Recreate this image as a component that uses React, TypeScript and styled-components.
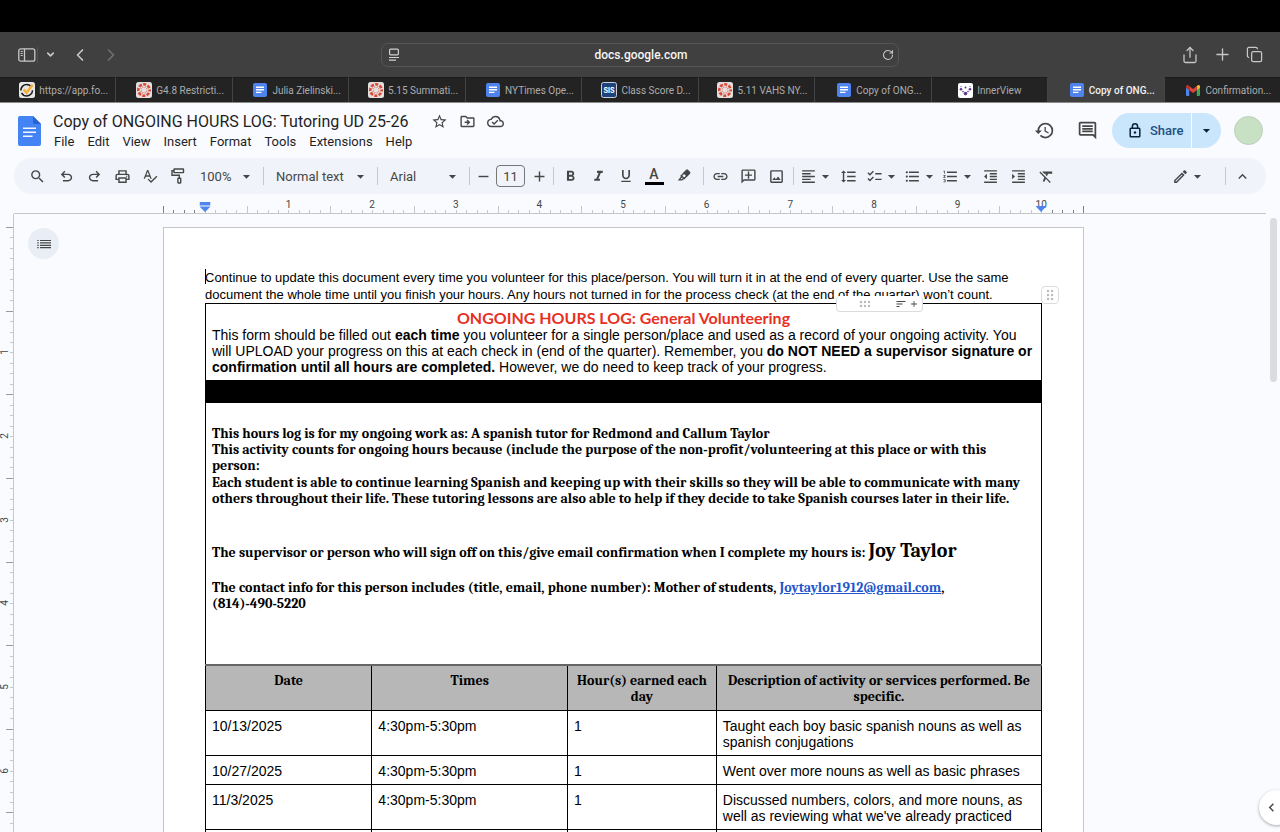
import React from 'react';
import styled, { createGlobalStyle } from 'styled-components';
import { ChevronLeft, ChevronRight, ChevronDown, Copy, Plus, RotateCw, Share } from 'lucide-react';
import {
  MdSearch, MdOutlinePrint, MdSpellcheck, MdArrowDropDown, MdRemove, MdAdd, MdFormatBold,
  MdFormatItalic, MdFormatUnderlined, MdLink, MdOutlineAddComment, MdOutlineImage, MdFormatAlignLeft,
  MdFormatLineSpacing, MdChecklist, MdFormatListBulleted, MdFormatListNumbered, MdFormatIndentDecrease,
  MdFormatIndentIncrease, MdFormatClear, MdOutlineEdit, MdKeyboardArrowUp, MdKeyboardArrowLeft, MdHistory,
  MdOutlineComment, MdStarBorder, MdOutlineDriveFileMove, MdOutlineCloudDone, MdSort,
} from 'react-icons/md';

const ui = `Roboto, "Liberation Sans", sans-serif`;
const arial = `"Liberation Sans", Arial, sans-serif`;
const cambria = `Cambria, "Liberation Serif", serif`;

const Global = createGlobalStyle`
  *, *::before, *::after { box-sizing: border-box; }
  body { margin: 0; background: #f9fbff; overflow: hidden; }
  button, input, select { font: inherit; color: inherit; margin: 0; padding: 0; border: 0; background: none; }
  button { cursor: pointer; }
  svg { display: block; flex: none; }
`;

const App_ = styled.div`
  display: flex;
  flex-direction: column;
  height: 100vh;
  font-family: ${ui};
  color: #444746;
`;

const MenuBarGap = styled.div`
  height: 32px;
  flex: none;
  background: #000;
`;

/* Browser chrome */
const BrowserBar = styled.header`
  display: grid;
  grid-template-columns: 1fr minmax(200px, 518px) 1fr;
  align-items: center;
  height: 45px;
  flex: none;
  padding: 0 16px;
  background: #404040;
  color: #c4c4c4;
`;

const BarSide = styled.div<{ $end?: boolean }>`
  display: flex;
  align-items: center;
  justify-content: ${(p) => (p.$end ? 'flex-end' : 'flex-start')};
  gap: ${(p) => (p.$end ? 12 : 0)}px;
`;

const BarButton = styled.button<{ $w: number; $dim?: boolean }>`
  display: flex;
  justify-content: center;
  width: ${(p) => p.$w}px;
  color: ${(p) => (p.$dim ? '#707070' : '#c8c8c8')};
`;

const BarRule = styled.span`
  width: 1px;
  height: 16px;
  background: #525252;
`;

const Address = styled.div`
  display: flex;
  align-items: center;
  height: 24px;
  padding: 0 4px 0 6px;
  border: 1px solid #555;
  border-radius: 7px;
  color: #d0d0d0;
`;

const AddressInput = styled.input`
  flex: 1;
  min-width: 0;
  text-align: center;
  font-size: 12px;
  font-weight: 500;
  color: #f4f4f4;
`;

const TabStrip = styled.nav`
  display: flex;
  height: 26px;
  flex: none;
  border-bottom: 1px solid #8a8a8a;
  background: #232323;
`;

const Tab = styled.button<{ $active?: boolean }>`
  display: flex;
  flex: 1 1 0;
  min-width: 0;
  align-items: center;
  justify-content: center;
  gap: 4px;
  padding-left: 12px;
  border-top: 1px solid ${(p) => (p.$active ? '#404040' : '#1b1b1b')};
  border-right: 1px solid #444;
  background: ${(p) => (p.$active ? '#404040' : '#232323')};
  color: ${(p) => (p.$active ? '#f2f2f2' : '#acacac')};
  font-size: 10px;
  font-weight: ${(p) => (p.$active ? 500 : 400)};
  white-space: nowrap;
  &:last-child { border-right: 0; }
`;

const TabMark = styled.span`
  display: flex;
  flex: none;
  justify-content: center;
  width: 16px;
`;

const TabLabel = styled.span`
  min-width: 56px;
  text-align: left;
`;

/* Document header */
const DocHeader = styled.header`
  display: flex;
  align-items: center;
  flex: none;
  height: 55px;
  padding: 0 17px 0 18px;
`;

const TitleBlock = styled.div`
  display: flex;
  flex-direction: column;
  flex: 1;
  min-width: 0;
  margin-left: 5px;
`;

const TitleRow = styled.div`
  display: flex;
  align-items: center;
  gap: 11px;
  height: 22px;
  padding-left: 7px;
`;

const Title = styled.h1`
  margin: 0 12px 0 0;
  font-size: 16px;
  line-height: 22px;
  font-weight: 400;
  color: #1f1f1f;
  white-space: nowrap;
`;

const PlainButton = styled.button`
  display: flex;
  align-items: center;
  justify-content: center;
`;

const Menus = styled.nav`
  display: flex;
  height: 18px;
  padding-left: 2px;
`;

const MenuItem = styled.button`
  padding: 0 7px 0 6px;
  font-size: 13px;
  line-height: 18px;
  color: #1f1f1f;
`;

const HeaderTools = styled.div`
  display: flex;
  align-items: center;
  gap: 22px;
  margin-right: 14px;
`;

const ShareGroup = styled.div`
  display: flex;
  gap: 1px;
  height: 35px;
  margin-right: 13px;
`;

const ShareButton = styled.button`
  display: flex;
  align-items: center;
  gap: 9px;
  width: 79px;
  padding-left: 17px;
  border-radius: 18px 0 0 18px;
  background: #c9e6fd;
  color: #0b2239;
  font-size: 13px;
  font-weight: 500;
  span { color: #1f4f80; }
`;

const ShareMore = styled.button`
  display: flex;
  align-items: center;
  justify-content: center;
  width: 29px;
  border-radius: 0 18px 18px 0;
  background: #c9e6fd;
  color: #0b2239;
`;

const Avatar = styled.button`
  width: 29px;
  height: 29px;
  border: 1px solid #bccfba;
  border-radius: 50%;
  background: #c8e1c5;
`;

/* Toolbar */
const Toolbar = styled.div`
  display: flex;
  align-items: center;
  flex: none;
  height: 36px;
  margin: 0 14px;
  padding: 0 10px 0 8px;
  border-radius: 18px;
  background: #f0f3f9;
  font-size: 13px;
`;

const Tool = styled.button<{ $w?: number }>`
  display: flex;
  flex-direction: column;
  align-items: center;
  justify-content: center;
  flex: none;
  width: ${(p) => p.$w ?? 28}px;
  height: 24px;
`;

const SplitTool = styled.button`
  display: flex;
  align-items: center;
  flex: none;
  width: 38px;
  height: 24px;
  padding-left: 4px;
`;

const Rule = styled.span`
  flex: none;
  width: 1px;
  height: 18px;
  margin: 0 2px 0 3px;
  background: #c7c7c7;
`;

const SelectBox = styled.label<{ $w: number }>`
  display: grid;
  flex: none;
  width: ${(p) => p.$w}px;
  align-items: center;
  > * { grid-area: 1 / 1; }
  > svg { justify-self: end; margin-right: 5px; pointer-events: none; }
`;

const Select = styled.select<{ $pad: number }>`
  width: 100%;
  height: 24px;
  padding-left: ${(p) => p.$pad}px;
  appearance: none;
`;

const SizeInput = styled.input`
  flex: none;
  width: 29px;
  height: 22px;
  margin: 0 3px 0 2px;
  border: 1px solid #747775;
  border-radius: 4px;
  text-align: center;
`;

const ColorLetter = styled.span`
  font-size: 14px;
  line-height: 15px;
  font-weight: 500;
`;

const ColorBar = styled.span`
  width: 19px;
  height: 3px;
  background: #000;
`;

const AddCommentIcon = styled(MdOutlineAddComment)`
  transform: scaleX(-1);
`;

const Spacer = styled.div`
  flex: 1;
`;

const ModeTool = styled(SplitTool)`
  margin-right: 16px;
`;

/* Workspace */
const Workspace = styled.main`
  display: grid;
  grid-template-columns: 14px 149px minmax(0, 921px) 1fr 14px;
  grid-template-rows: 20px minmax(0, 1fr);
  flex: 1;
  min-height: 0;
  overflow: hidden;
`;

const RulerLine = styled.div`
  grid-row: 1;
  grid-column: 2 / 5;
  border-bottom: 1px solid #c7c7c7;
`;

const Ruler = styled.div`
  position: relative;
  display: flex;
  grid-row: 1;
  grid-column: 3;
  padding-bottom: 1px;
`;

const RulerEnd = styled.span`
  align-self: flex-end;
  width: 1px;
  height: 7px;
  background: #808080;
`;

const Inch = styled.div`
  display: flex;
  flex-direction: column;
  justify-content: flex-end;
  flex: 1;
`;

const InchLabel = styled.span`
  height: 12px;
  margin-bottom: -5px;
  text-align: center;
  font-size: 10px;
  line-height: 12px;
`;

const Ticks = styled.div`
  display: flex;
  align-items: flex-end;
  height: 7px;
`;

const Tick = styled.i<{ $tall: boolean; $dark: boolean }>`
  flex: 1;
  height: ${(p) => (p.$tall ? 7 : 3)}px;
  border-left: 1px solid ${(p) => (p.$dark ? '#808080' : '#c7c7c7')};
`;

const IndentMarker = styled.svg<{ $at: string }>`
  position: absolute;
  left: ${(p) => p.$at};
  bottom: 2px;
  transform: translateX(-50%);
`;

const SideRuler = styled.div`
  grid-row: 2;
  grid-column: 1;
  border-right: 1px solid #c7c7c7;
  padding-top: 13px;
  overflow: hidden;
`;

const SideRulerScale = styled.div`
  display: flex;
  flex-direction: column;
  height: 920px;
`;

const SideInch = styled.div`
  display: flex;
  flex: 1;
  align-items: stretch;
`;

const SideLabel = styled.span`
  align-self: center;
  width: 10px;
  margin-right: -4px;
  text-align: center;
  font-size: 10px;
  line-height: 10px;
  transform: rotate(-90deg);
`;

const SideTicks = styled.div`
  display: flex;
  flex-direction: column;
  align-items: flex-end;
  width: 7px;
`;

const SideTick = styled.i<{ $tall: boolean }>`
  flex: 1;
  width: ${(p) => (p.$tall ? 7 : 3)}px;
  border-top: 1px solid ${(p) => (p.$tall ? '#9a9a9a' : '#c7c7c7')};
`;

const OutlineRail = styled.aside`
  grid-row: 2;
  grid-column: 2;
  padding: 14px;
`;

const OutlineButton = styled.button`
  display: flex;
  align-items: center;
  justify-content: center;
  width: 31px;
  height: 31px;
  border-radius: 50%;
  background: #e9eef6;
`;

const ScrollTrack = styled.div`
  grid-row: 1 / 3;
  grid-column: 5;
  display: flex;
  justify-content: center;
  padding-top: 24px;
`;

const ScrollThumb = styled.div`
  width: 7px;
  height: 164px;
  border-radius: 4px;
  background: #dadce0;
`;

const PanelToggle = styled.button`
  position: fixed;
  right: -14px;
  bottom: 7px;
  display: flex;
  align-items: center;
  width: 35px;
  height: 35px;
  padding-left: 4px;
  border-radius: 50%;
  background: #fff;
  box-shadow: 0 1px 3px rgba(60, 64, 67, 0.45);
`;

/* Page */
const Sheet = styled.article`
  position: relative;
  grid-row: 2;
  grid-column: 3;
  margin-top: 13px;
  min-height: 712px;
  padding: 41px 41px 0;
  border: 1px solid #c7c7c7;
  background: #fff;
  color: #000;
  font-family: ${arial};
`;

const Intro = styled.p`
  margin: 0;
  font-size: 13px;
  line-height: 17px;
`;

const Caret = styled.span`
  position: absolute;
  width: 1px;
  height: 15px;
  background: #000;
`;

const Log = styled.table`
  width: 100%;
  border-collapse: collapse;
  table-layout: fixed;
  font-size: 14px;
  line-height: 16px;
`;

const Col = styled.col<{ $share?: string }>`
  width: ${(p) => p.$share ?? 'auto'};
`;

const Cell = styled.td`
  padding: 7px 6px 5px;
  border: 1px solid #000;
  vertical-align: top;
`;

const HeadCell = styled.th`
  padding: 7px 6px 5px;
  border: 1px solid #000;
  border-top: 2px solid #666;
  background: #b7b7b7;
  vertical-align: top;
  font-family: ${cambria};
  font-size: 14px;
`;

const IntroCell = styled.td`
  padding: 5px 6px;
  border: 1px solid #000;
`;

const LogHeading = styled.h2`
  margin: 0;
  text-align: center;
  font-family: Lato, sans-serif;
  font-size: 16px;
  line-height: 18px;
  font-weight: 700;
  color: #e8301f;
`;

const Copyline = styled.p`
  margin: 0;
`;

const BlackCell = styled.td`
  height: 22px;
  padding: 0;
  border: 1px solid #000;
  background: #000;
`;

const DetailCell = styled.td`
  height: 262px;
  padding: 23px 6px 0;
  border: 1px solid #000;
  vertical-align: top;
  font-family: ${cambria};
  font-weight: 700;
`;

const Detail = styled.p<{ $above?: number }>`
  margin: ${(p) => p.$above ?? 0}px 0 0;
`;

const Name = styled.span`
  font-size: 20px;
  line-height: 22px;
`;

const Mail = styled.a`
  color: #1f56cc;
`;

const ColumnHandle = styled.div`
  position: absolute;
  top: 68px;
  left: 672px;
  display: flex;
  align-items: center;
  width: 87px;
  height: 16px;
  padding-left: 22px;
  border: 1px solid #dadce0;
  border-top-color: #fff;
  border-radius: 4px;
  background: #fff;
  color: #444746;
`;

const HandleTools = styled.span`
  display: flex;
  align-items: center;
  gap: 2px;
  margin-left: 24px;
`;

const RowHandle = styled.div`
  position: absolute;
  top: 58px;
  left: 877px;
  display: flex;
  align-items: center;
  justify-content: center;
  width: 18px;
  height: 18px;
  border: 1px solid #dadce0;
  border-radius: 4px;
  background: #fff;
`;

/* Site marks */
const DocsMark = () => (
  <svg width="14" height="14" viewBox="0 0 14 14">
    <rect width="14" height="14" rx="2" fill="#4f83ee" />
    <path d="M3 4.2h8M3 6.8h8M3 9.4h5.5" stroke="#fff" strokeWidth="1.4" />
  </svg>
);

const CanvasMark = () => (
  <svg width="16" height="16" viewBox="0 0 16 16">
    <rect width="16" height="16" rx="2.5" fill="#e4dfdd" />
    <circle cx="8" cy="8" r="5.7" fill="none" stroke="#d9493a" strokeWidth="2.6" strokeDasharray="3.1 1.38" strokeDashoffset="1.55" />
    {[0, 45, 90, 135, 180, 225, 270, 315].map((a) => (
      <circle key={a} cx="8" cy="4.9" r="0.6" fill="#d9493a" transform={`rotate(${a + 22.5} 8 8)`} />
    ))}
  </svg>
);

const CheckMark = () => (
  <svg width="16" height="16" viewBox="0 0 16 16">
    <rect width="16" height="16" rx="2.5" fill="#e6e6e6" />
    <circle cx="7.7" cy="8.2" r="5.8" fill="none" stroke="#1c1c1c" strokeWidth="1.5" strokeDasharray="15 2.5 14 5" />
    <path d="M4.6 7.5l3 3.2L13.6 2.8" fill="none" stroke="#f3b13c" strokeWidth="2.6" />
  </svg>
);

const SisMark = () => (
  <svg width="16" height="16" viewBox="0 0 16 16">
    <rect x=".5" y=".5" width="15" height="15" rx="2" fill="#1d427c" stroke="#c9d1dc" />
    <text x="8" y="10.6" textAnchor="middle" fontFamily="Inter, sans-serif" fontSize="7" fontWeight="700" fill="#fff">SIS</text>
  </svg>
);

const InnerMark = () => (
  <svg width="15" height="15" viewBox="0 0 15 15">
    <rect width="15" height="15" rx="2" fill="#fff" />
    <g fill="#5c3a8e">
      <circle cx="3" cy="6.2" r="1.3" /><circle cx="7.5" cy="4.4" r="1" /><circle cx="12" cy="6.2" r="1.3" />
      <circle cx="5" cy="8.6" r=".8" /><circle cx="10" cy="8.6" r=".8" /><circle cx="7.5" cy="10.6" r="1.8" />
      <circle cx="12" cy="3.6" r=".6" /><circle cx="3" cy="3.6" r=".6" />
    </g>
  </svg>
);

const MailMark = () => (
  <svg width="14" height="11" viewBox="0 0 14 11">
    <path d="M0 1.8v8.2c0 .5.4.9.9.9h2.3V4.8z" fill="#4f83ee" />
    <path d="M14 1.8v8.2c0 .5-.4.9-.9.9h-2.3V4.8z" fill="#3fa656" />
    <path d="M10.8 1.2v4L14 2.8V1.6C14 .2 12.500-.4 11.500.5z" fill="#f2b92c" />
    <path d="M3.200 1.100v4.100L7 8l3.800-2.800V1.100L7 4z" fill="#dd4436" />
    <path d="M0 1.600v1.200l3.200 2.400v-4L2.500.5C1.500-.4 0 .2 0 1.600z" fill="#b8322a" />
  </svg>
);

const SidebarIcon = () => (
  <svg width="18" height="14" viewBox="0 0 18 14" fill="none" stroke="currentColor" strokeWidth="1.3">
    <rect x=".8" y=".8" width="16" height="12.400" rx="2" />
    <path d="M6.500 1v12" />
    <path d="M2.700 3.500h2M2.700 5.500h2M2.700 7.500h2" strokeWidth="1" />
  </svg>
);

const ReaderIcon = () => (
  <svg width="12" height="14" viewBox="0 0 12 14" fill="none" stroke="currentColor" strokeWidth="1.200">
    <rect x="1.600" y="1.200" width="8.800" height="5.600" rx="1" />
    <path d="M1 9.500h10M1 12.200h7" />
  </svg>
);

const DocsLogo = () => (
  <svg width="23" height="30" viewBox="0 0 23 30">
    <path d="M2 0h13l8 8v20a2 2 0 0 1-2 2H2a2 2 0 0 1-2-2V2a2 2 0 0 1 2-2z" fill="#4383f3" />
    <path d="M15 0l8 8h-6.500A1.500 1.500 0 0 1 15 6.500z" fill="#2a63cf" />
    <path d="M5 12.300h13M5 16.300h13M5 20.300h9.500" stroke="#f3f7ff" strokeWidth="1.500" />
  </svg>
);

const Symbol = ({ d, size = 17 }: { d: string; size?: number }) => (
  <svg width={size} height={size} viewBox="0 -960 960 960" fill="currentColor"><path d={d} /></svg>
);
const UNDO = 'M280-200v-80h284q63 0 109.500-40T720-420q0-60-46.500-100T564-560H312l104 104-56 56-200-200 200-200 56 56-104 104h252q97 0 166.500 63T800-420q0 94-69.500 157T564-200H280Z';
const REDO = 'M396-200q-97 0-166.500-63T160-420q0-94 69.500-157T396-640h252L544-744l56-56 200 200-200 200-56-56 104-104H396q-63 0-109.500 40T240-420q0 60 46.500 100T396-280h284v80H396Z';

const RollerIcon = () => (
  <svg width="14" height="16" viewBox="0 0 14 16" fill="none" stroke="currentColor" strokeWidth="1.400">
    <rect x="3" y="1" width="9.500" height="3.600" rx=".4" />
    <path d="M3 2.800H1v4.400h7.300v3" />
    <rect x="6.900" y="10.200" width="2.800" height="4.800" rx=".4" />
  </svg>
);

const HighlighterIcon = () => (
  <svg width="13" height="15" viewBox="0 0 13 15" fill="none" stroke="currentColor" strokeWidth="1.300">
    <path d="M3.300 6.700L8.600 1.500a.9.9 0 0 1 1.200 0l1.600 1.600a.9.9 0 0 1 0 1.200L6.200 9.500z" />
    <path d="M6 4l2.900 2.900 2.700-2.800L8.900 1.200z" fill="currentColor" />
    <path d="M3.300 6.700v1.500L1.200 10.800h2.900l.9-.9 1.200-.4" />
  </svg>
);

const LockIcon = () => (
  <svg width="12" height="15" viewBox="0 0 12 15" fill="none" stroke="currentColor" strokeWidth="1.500">
    <rect x="1.200" y="5.200" width="9.600" height="8.600" rx=".8" />
    <path d="M3.400 5.200V3.400a2.600 2.600 0 0 1 5.200 0v1.800" />
    <circle cx="6" cy="9.500" r="1.200" fill="currentColor" stroke="none" />
  </svg>
);

const Dots = ({ cols, rows }: { cols: number; rows: number }) => (
  <svg width={cols * 4} height={rows * 4} viewBox={`0 0 ${cols * 4} ${rows * 4}`} fill="#b8babd">
    {Array.from({ length: cols * rows }, (_, i) => (
      <circle key={i} cx={(i % cols) * 4 + 2} cy={Math.floor(i / cols) * 4 + 2} r="1.200" />
    ))}
  </svg>
);

const tabs = [
  { mark: <CheckMark />, text: 'https://app.fo...' },
  { mark: <CanvasMark />, text: 'G4.8 Restricti...' },
  { mark: <DocsMark />, text: 'Julia Zielinski...' },
  { mark: <CanvasMark />, text: '5.15 Summati...' },
  { mark: <DocsMark />, text: 'NYTimes Ope...' },
  { mark: <SisMark />, text: 'Class Score D...' },
  { mark: <CanvasMark />, text: '5.11 VAHS NY...' },
  { mark: <DocsMark />, text: 'Copy of ONG...' },
  { mark: <InnerMark />, text: 'InnerView' },
  { mark: <DocsMark />, text: 'Copy of ONG...', active: true },
  { mark: <MailMark />, text: 'Confirmation...' },
];

const menus = ['File', 'Edit', 'View', 'Insert', 'Format', 'Tools', 'Extensions', 'Help'];

const entries = [
  ['10/13/2025', '4:30pm-5:30pm', '1', 'Taught each boy basic spanish nouns as well as spanish conjugations'],
  ['10/27/2025', '4:30pm-5:30pm', '1', 'Went over more nouns as well as basic phrases'],
  ['11/3/2025', '4:30pm-5:30pm', '1', "Discussed numbers, colors, and more nouns, as well as reviewing what we've already practiced"],
  ['', '', '', ''],
];

const inches = Array.from({ length: 11 }, (_, i) => i);
const sideInches = inches.slice(0, 8);
const eighths = Array.from({ length: 8 }, (_, i) => i);

const Split = ({ label, children }: { label: string; children: React.ReactNode }) => (
  <SplitTool aria-label={label}>{children}<MdArrowDropDown size={17} /></SplitTool>
);

const Picker = ({ label, value, w, pad }: { label: string; value: string; w: number; pad: number }) => (
  <SelectBox $w={w}>
    <Select aria-label={label} $pad={pad} defaultValue={value}><option>{value}</option></Select>
    <MdArrowDropDown size={17} />
  </SelectBox>
);

export default function App() {
  return (
    <App_>
      <Global />
      <MenuBarGap />
      <BrowserBar>
        <BarSide>
          <BarButton $w={21} aria-label="Sidebar"><SidebarIcon /></BarButton>
          <BarRule />
          <BarButton $w={24} aria-label="Tab groups"><ChevronDown size={11} strokeWidth={3.5} /></BarButton>
          <BarButton $w={36} aria-label="Back"><ChevronLeft size={20} strokeWidth={2} /></BarButton>
          <BarButton $w={26} $dim aria-label="Forward"><ChevronRight size={20} strokeWidth={2} /></BarButton>
        </BarSide>
        <Address>
          <ReaderIcon />
          <AddressInput aria-label="Address" defaultValue="docs.google.com" />
          <BarButton $w={12} aria-label="Reload"><RotateCw size={12} strokeWidth={2.2} /></BarButton>
        </Address>
        <BarSide $end>
          <BarButton $w={20} aria-label="Share page"><Share size={18} strokeWidth={1.7} /></BarButton>
          <BarButton $w={20} aria-label="New tab"><Plus size={19} strokeWidth={1.7} /></BarButton>
          <BarButton $w={20} aria-label="Tab overview"><Copy size={17} strokeWidth={1.8} /></BarButton>
        </BarSide>
      </BrowserBar>
      <TabStrip>
        {tabs.map((t, i) => (
          <Tab key={i} $active={t.active}><TabMark>{t.mark}</TabMark><TabLabel>{t.text}</TabLabel></Tab>
        ))}
      </TabStrip>

      <DocHeader>
        <DocsLogo />
        <TitleBlock>
          <TitleRow>
            <Title>Copy of ONGOING HOURS LOG: Tutoring UD 25-26</Title>
            <PlainButton aria-label="Star"><MdStarBorder size={17} /></PlainButton>
            <PlainButton aria-label="Move"><MdOutlineDriveFileMove size={17} /></PlainButton>
            <PlainButton aria-label="Saved to cloud"><MdOutlineCloudDone size={17} /></PlainButton>
          </TitleRow>
          <Menus>{menus.map((m) => <MenuItem key={m}>{m}</MenuItem>)}</Menus>
        </TitleBlock>
        <HeaderTools>
          <PlainButton aria-label="Version history"><MdHistory size={21} /></PlainButton>
          <PlainButton aria-label="Comments"><MdOutlineComment size={21} /></PlainButton>
        </HeaderTools>
        <ShareGroup>
          <ShareButton><LockIcon /><span>Share</span></ShareButton>
          <ShareMore aria-label="Share options"><MdArrowDropDown size={17} /></ShareMore>
        </ShareGroup>
        <Avatar aria-label="Account" />
      </DocHeader>

      <Toolbar>
        <Tool $w={30} aria-label="Search"><MdSearch size={17} /></Tool>
        <Tool aria-label="Undo"><Symbol d={UNDO} /></Tool>
        <Tool aria-label="Redo"><Symbol d={REDO} /></Tool>
        <Tool aria-label="Print"><MdOutlinePrint size={17} /></Tool>
        <Tool aria-label="Spelling"><MdSpellcheck size={16} /></Tool>
        <Tool aria-label="Paint format"><RollerIcon /></Tool>
        <Picker label="Zoom" value="100%" w={68} pad={8} />
        <Rule />
        <Picker label="Style" value="Normal text" w={108} pad={10} />
        <Rule />
        <Picker label="Font" value="Arial" w={86} pad={10} />
        <Rule />
        <Tool $w={22} aria-label="Decrease font size"><MdRemove size={17} /></Tool>
        <SizeInput aria-label="Font size" defaultValue="11" />
        <Tool $w={22} aria-label="Increase font size"><MdAdd size={17} /></Tool>
        <Rule />
        <Tool aria-label="Bold"><MdFormatBold size={17} /></Tool>
        <Tool aria-label="Italic"><MdFormatItalic size={17} /></Tool>
        <Tool aria-label="Underline"><MdFormatUnderlined size={16} /></Tool>
        <Tool aria-label="Text color"><ColorLetter>A</ColorLetter><ColorBar /></Tool>
        <Tool $w={32} aria-label="Highlight color"><HighlighterIcon /></Tool>
        <Rule />
        <Tool aria-label="Insert link"><MdLink size={17} /></Tool>
        <Tool aria-label="Add comment"><AddCommentIcon size={17} /></Tool>
        <Tool aria-label="Insert image"><MdOutlineImage size={17} /></Tool>
        <Rule />
        <Split label="Align"><MdFormatAlignLeft size={17} /></Split>
        <Tool aria-label="Line spacing"><MdFormatLineSpacing size={17} /></Tool>
        <Split label="Checklist"><MdChecklist size={17} /></Split>
        <Split label="Bulleted list"><MdFormatListBulleted size={17} /></Split>
        <Split label="Numbered list"><MdFormatListNumbered size={17} /></Split>
        <Tool aria-label="Decrease indent"><MdFormatIndentDecrease size={17} /></Tool>
        <Tool aria-label="Increase indent"><MdFormatIndentIncrease size={17} /></Tool>
        <Tool aria-label="Clear formatting"><MdFormatClear size={17} /></Tool>
        <Spacer />
        <ModeTool aria-label="Editing mode"><MdOutlineEdit size={17} /><MdArrowDropDown size={17} /></ModeTool>
        <Rule />
        <Tool aria-label="Hide menus"><MdKeyboardArrowUp size={17} /></Tool>
      </Toolbar>

      <Workspace>
        <RulerLine />
        <Ruler>
          {inches.map((n) => (
            <Inch key={n}>
              <InchLabel>{n || ''}</InchLabel>
              <Ticks>
                {eighths.map((e) => (
                  <Tick key={e} $tall={e === 0} $dark={(n === 0 && e < 4) || (n === 10 && e > 4)} />
                ))}
              </Ticks>
            </Inch>
          ))}
          <RulerEnd />
          <IndentMarker $at="42px" width="11" height="10" viewBox="0 0 11 10" fill="#4f83ee">
            <path d="M0 0h11v3.500H0zM0 4.500h11L5.500 10z" />
          </IndentMarker>
          <IndentMarker $at="calc(100% - 43px)" width="11" height="6" viewBox="0 0 11 6" fill="#4f83ee">
            <path d="M0 0h11L5.500 6z" />
          </IndentMarker>
        </Ruler>
        <SideRuler>
          <SideRulerScale>
            {inches.map((n) => (
              <SideInch key={n}>
                <SideLabel>{n > 0 && n < sideInches.length ? n : ''}</SideLabel>
                <SideTicks>
                  {eighths.map((e) => <SideTick key={e} $tall={e === 0} />)}
                </SideTicks>
              </SideInch>
            ))}
          </SideRulerScale>
        </SideRuler>
        <OutlineRail>
          <OutlineButton aria-label="Show outline">
            <svg width="14" height="10" viewBox="0 0 14 10" stroke="currentColor" strokeWidth="1.200">
              <path d="M3 1.500h11M3 3.900h11M3 6.300h11M3 8.700h11M.3 1.500h1.400M.3 3.900h1.400M.3 6.300h1.400M.3 8.700h1.400" />
            </svg>
          </OutlineButton>
        </OutlineRail>

        <Sheet>
          <Intro>
            <Caret />
            Continue to update this document every time you volunteer for this place/person. You will turn it in at the
            end of every quarter. Use the same document the whole time until you finish your hours. Any hours not turned
            in for the process check (at the end of the quarter) won’t count.
          </Intro>
          <Log>
            <colgroup>
              <Col $share="19.9%" />
              <Col $share="23.4%" />
              <Col $share="17.8%" />
              <Col />
            </colgroup>
            <tbody>
              <tr>
                <IntroCell colSpan={4}>
                  <LogHeading>ONGOING HOURS LOG: General Volunteering</LogHeading>
                  <Copyline>
                    This form should be filled out <b>each time</b> you volunteer for a single person/place and used as a
                    record of your ongoing activity. You will UPLOAD your progress on this at each check in (end of the
                    quarter). Remember, you <b>do NOT NEED a supervisor signature or confirmation until all hours are
                    completed.</b> However, we do need to keep track of your progress.
                  </Copyline>
                </IntroCell>
              </tr>
              <tr><BlackCell colSpan={4} /></tr>
              <tr>
                <DetailCell colSpan={4}>
                  <Detail>This hours log is for my ongoing work as: A spanish tutor for Redmond and Callum Taylor</Detail>
                  <Detail>
                    This activity counts for ongoing hours because (include the purpose of the non-profit/volunteering at
                    this place or with this<br />person:
                  </Detail>
                  <Detail $above={1}>
                    Each student is able to continue learning Spanish and keeping up with their skills so they will be
                    able to communicate with many<br />others throughout their life. These tutoring lessons are also able
                    to help if they decide to take Spanish courses later in their life.
                  </Detail>
                  <Detail $above={33}>
                    The supervisor or person who will sign off on this/give email confirmation when I complete my hours
                    is: <Name>Joy Taylor</Name>
                  </Detail>
                  <Detail $above={18}>
                    The contact info for this person includes (title, email, phone number): Mother of students,{' '}
                    <Mail href="mailto:Joytaylor1912@gmail.com">Joytaylor1912@gmail.com</Mail>,<br />(814)-490-5220
                  </Detail>
                </DetailCell>
              </tr>
              <tr>
                <HeadCell>Date</HeadCell>
                <HeadCell>Times</HeadCell>
                <HeadCell>Hour(s) earned each day</HeadCell>
                <HeadCell>Description of activity or services performed. Be specific.</HeadCell>
              </tr>
              {entries.map((row, i) => (
                <tr key={i}>{row.map((c, j) => <Cell key={j}>{c}</Cell>)}</tr>
              ))}
            </tbody>
          </Log>
          <ColumnHandle>
            <Dots cols={3} rows={2} />
            <HandleTools><MdSort size={12} /><MdAdd size={10} /></HandleTools>
          </ColumnHandle>
          <RowHandle><Dots cols={2} rows={3} /></RowHandle>
        </Sheet>

        <ScrollTrack><ScrollThumb /></ScrollTrack>
      </Workspace>
      <PanelToggle aria-label="Show side panel"><MdKeyboardArrowLeft size={17} /></PanelToggle>
    </App_>
  );
}
